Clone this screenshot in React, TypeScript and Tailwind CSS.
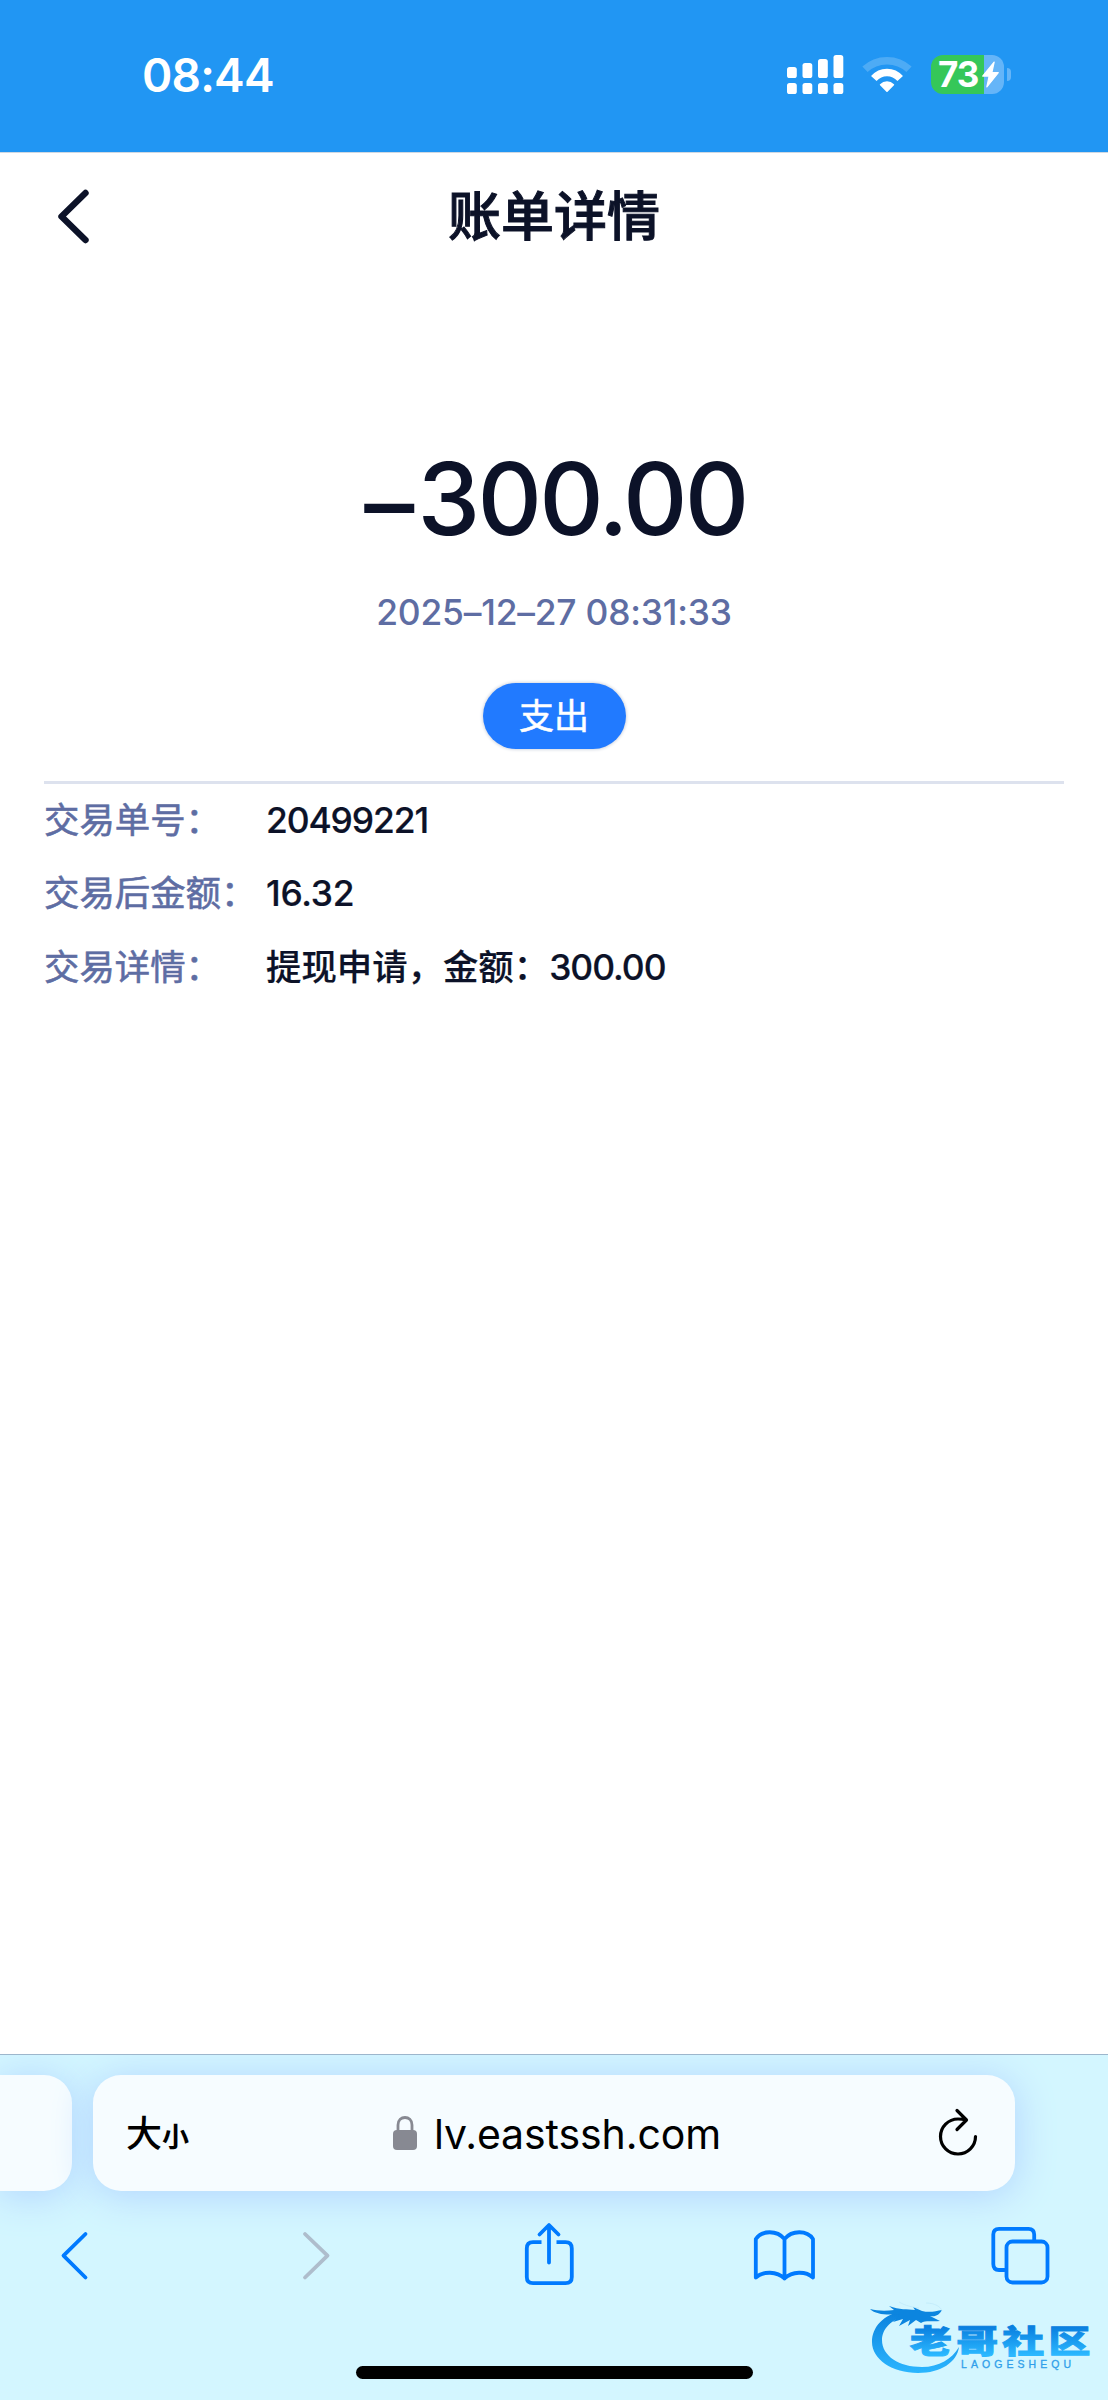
import type { ReactNode } from 'react';

type DetailRowProps = {
  label: string;
  children: ReactNode;
};

const details = [
  { label: '交易单号：', value: '20499221', height: 'h-[73px]', tracking: 'tracking-[-1.1px]' },
  { label: '交易后金额：', value: '16.32', height: 'h-[74px]', tracking: 'tracking-[-0.3px]' },
];

function SignalIcon() {
  const bars = [
    { x: 0, y: 12 },
    { x: 15.5, y: 8 },
    { x: 31, y: 4 },
    { x: 46.5, y: 0 },
  ];
  return (
    <svg width="57" height="39" viewBox="0 0 57 39" fill="white" aria-hidden>
      {bars.map((bar) => (
        <g key={bar.x}>
          <rect x={bar.x} y={bar.y} width="9.8" height={23 - bar.y} rx="2.6" />
          <rect x={bar.x} y="28" width="9.8" height="11" rx="2.6" />
        </g>
      ))}
    </svg>
  );
}

function WifiIcon() {
  return (
    <svg width="50" height="37" viewBox="0 0 50 37" fill="none" stroke="white" aria-hidden>
      <path d="M3 13.3C15 1.8 35 1.8 47 13.3" strokeWidth="7.6" strokeOpacity="0.2" />
      <path d="M11.8 22.5C19 14.4 31 14.4 38.2 22.5" strokeWidth="7.4" />
      <path
        d="M18.6 28.8C22.2 25.2 27.8 25.2 31.4 28.8L25 35.2Z"
        fill="white"
        strokeWidth="1.6"
        strokeLinejoin="round"
      />
    </svg>
  );
}

function BatteryIcon() {
  return (
    <div className="flex items-center gap-[3px]">
      <div className="flex h-[39px] w-[73px] items-center rounded-[12px] bg-[linear-gradient(90deg,#35c759_53px,#65b5f8_53px)] pl-[7px]">
        <span className="w-[43px] text-[35px] leading-[39px] font-bold tracking-[-1px] text-white">73</span>
        <svg className="shrink-0" width="19" height="27" viewBox="0 0 17 26" fill="white" aria-hidden>
          <path
            d="M12 1L1 14.5H7.2L5 25L16 11.2H9.8Z"
            stroke="white"
            strokeWidth="1.2"
            strokeLinejoin="round"
          />
        </svg>
      </div>
      <div className="h-[13px] w-[4px] rounded-r-full bg-[#65b5f8]" />
    </div>
  );
}

function StatusBar() {
  return (
    <div className="flex h-[153px] justify-between border-b border-[#cfd8e2] bg-[#2196f3] pr-[97px] pl-[142px]">
      <span className="pt-[52px] text-[46px] leading-[46px] font-semibold tracking-[-0.8px] text-white">
        08:44
      </span>
      <div className="mt-[55px] flex h-[39px] items-center">
        <SignalIcon />
        <div className="w-[18px]" />
        <WifiIcon />
        <div className="w-[19px]" />
        <BatteryIcon />
      </div>
    </div>
  );
}

function DetailRow({ label, children }: DetailRowProps) {
  return (
    <div className="flex h-full items-center">
      <span className="w-[222px] shrink-0 text-[35.4px] text-[#5e6da3] [-webkit-text-stroke:0.6px_#5e6da3]">
        {label}
      </span>
      <span className="text-[35.4px] font-medium text-[#0c1228] [-webkit-text-stroke:0.2px_#0c1228]">{children}</span>
    </div>
  );
}

function Watermark() {
  return (
    <svg width="230" height="84" viewBox="0 0 230 84" aria-hidden>
      <defs>
        <linearGradient id="ring" x1="0" y1="0" x2="0" y2="1">
          <stop offset="0" stopColor="#0a80dc" />
          <stop offset="1" stopColor="#2bb6ff" />
        </linearGradient>
        <linearGradient id="name" x1="0" y1="0" x2="0" y2="1">
          <stop offset="0.25" stopColor="#0a80e0" />
          <stop offset="0.85" stopColor="#2bb8ff" />
        </linearGradient>
      </defs>
      <path
        d="M34 12C13 17 2 29 2 44C2 61 22 75 48 75C71 75 87 64 89 49C82 61 69 69 52 69C29 69 12 58 12 42C12 31 21 21 40 16Z"
        fill="url(#ring)"
      />
      <path
        d="M0 11C8 13 16 13 24 12L19 8C30 12 37 11 45 12L43 9L52 13C60 15 66 13 72 12C69 17 66 19 60 18L70 23C62 24 56 22 51 25L46 22L38 28L40 22L29 28L33 21L23 24L30 16C18 17 6 17 0 11Z"
        fill="#0c85df"
      />
      <path d="M29 4C36 8 42 9 49 10M56 5C65 5 71 9 72 13" fill="none" stroke="#b9e6f8" strokeWidth="0.6" />
      <g transform="translate(40 54.5) scale(1.27 0.95)">
        <text
          textLength="142"
          lengthAdjust="spacing"
          fill="url(#name)"
          stroke="url(#name)"
          strokeWidth="1"
          className="font-['Noto_Sans_CJK_SC',sans-serif] text-[33px] font-black"
        >
          老哥社区
        </text>
      </g>
      <text
        x="91"
        y="70"
        textLength="110"
        fill="#2f9fea"
        stroke="#2f9fea"
        strokeWidth="0.3"
        className="font-['Liberation_Sans',sans-serif] text-[10.5px]"
      >
        LAOGESHEQU
      </text>
    </svg>
  );
}

function AddressBar() {
  return (
    <div className="flex gap-[21px] pt-[20px]">
      <div className="h-[116px] w-[72px] rounded-r-[28px] bg-[#f6fcff] shadow-[0_4px_38px_2px_#b4d6ff]" />
      <div className="flex h-[116px] w-[922px] items-center rounded-[28px] bg-[#f6fcff] pr-[37px] pl-[33px] shadow-[0_4px_38px_2px_#b4d6ff]">
        <div className="flex w-[267px] items-baseline pt-[2px] font-medium text-black">
          <span className="text-[36px]">大</span>
          <span className="text-[27px] font-bold">小</span>
        </div>
        <svg width="24" height="34" viewBox="0 0 24 34" aria-hidden>
          <path d="M5 16V9C5 -1 19 -1 19 9V16" fill="none" stroke="#878992" strokeWidth="2.8" />
          <rect y="14" width="24" height="20" rx="4" fill="#878992" />
        </svg>
        <span className="flex-1 pt-[3px] pl-[17px] text-[41px] tracking-[-0.1px] text-black">lv.eastssh.com</span>
        <svg
          className="-mt-[3px]"
          width="40"
          height="48"
          viewBox="0 0 40 48"
          fill="none"
          stroke="black"
          strokeWidth="3.2"
          strokeLinecap="round"
          strokeLinejoin="round"
          aria-hidden
        >
          <path d="M37.5 28.5A17.5 17.5 0 1 1 20 11C23.5 11 25.5 11.3 28 12.2M19 2.5L28.5 12L19 21.5" />
        </svg>
      </div>
    </div>
  );
}

function Toolbar() {
  return (
    <svg
      className="block"
      width="1108"
      height="80"
      viewBox="0 2210 1108 80"
      fill="none"
      stroke="#007aff"
      strokeWidth="3.8"
      strokeLinecap="round"
      strokeLinejoin="round"
      aria-hidden
    >
      <path d="M85.5 2234L63.5 2255.7L85.5 2277.5" />
      <path d="M305 2234L327.5 2255.7L305 2277.5" stroke="#aebdcc" />
      <path d="M549 2262.5V2225.5M539.5 2234.5L549 2225L558.5 2234.5" />
      <path
        d="M541.5 2242.2H533Q526.8 2242.2 526.8 2248.5V2277Q526.8 2283.2 533 2283.2H565.5Q571.8 2283.2 571.8 2277V2248.5Q571.8 2242.2 565.5 2242.2H556.5"
        strokeLinecap="butt"
      />
      <path d="M784.5 2239C777 2230 762 2230 755.8 2239V2277.5C763 2271 777 2271 784.5 2278.5C792 2271 806 2271 813 2277.5V2239C807 2230 792 2230 784.5 2239V2278.5" />
      <path d="M1004.5 2270H999Q993.3 2270 993.3 2264V2234.5Q993.3 2228.8 999 2228.8H1028.5Q1034.2 2228.8 1034.2 2234.5V2240" />
      <rect x="1006.5" y="2241.5" width="41" height="41" rx="6" />
    </svg>
  );
}

export default function App() {
  return (
    <div className="flex h-[2400px] w-[1108px] flex-col overflow-hidden bg-white font-['Inter','Noto_Sans_CJK_SC',sans-serif]">
      <StatusBar />

      <header className="grid h-[127px] grid-cols-[1fr_auto_1fr] items-center pl-[56px] text-[#0c1228]">
        <svg
          width="36"
          height="58"
          viewBox="0 0 36 58"
          fill="none"
          stroke="currentColor"
          strokeWidth="6.4"
          strokeLinecap="round"
          strokeLinejoin="round"
          aria-hidden
        >
          <path d="M29.5 5L5.5 28.5L29.5 52" />
        </svg>
        <h1 className="-ml-[56px] pt-[2px] text-[53px] leading-none font-medium [-webkit-text-stroke:1px_#0c1228]">
          账单详情
        </h1>
      </header>

      <main className="flex flex-1 flex-col px-[44px]">
        <section className="flex flex-col items-center border-b-[3px] border-[#dde2ee] pt-[169px] pb-[32px]">
          <p className="pl-[3px] text-[100px] leading-[100px] font-medium tracking-[-2.8px] text-[#0c1228]">
            <span className="relative top-[4px] mr-[6px]">–</span>300.00
          </p>
          <p className="mt-[45px] text-[35.4px] leading-[38px] font-medium tracking-[-0.2px] text-[#5e6da3]">
            2025–12–27 08:31:33
          </p>
          <span className="mt-[51px] flex h-[66px] w-[143px] items-center justify-center rounded-full bg-[#217aff] text-[35px] text-white shadow-[0_0_3px_1px_#d5d9e2] [-webkit-text-stroke:0.5px_white]">
            支出
          </span>
        </section>

        <section>
          {details.map((item) => (
            <div key={item.label} className={item.height}>
              <DetailRow label={item.label}>
                <span className={item.tracking}>{item.value}</span>
              </DetailRow>
            </div>
          ))}
          <div className="h-[74px]">
            <DetailRow label="交易详情：">
              提现申请，金额：<span className="tracking-[-1px]">300.00</span>
            </DetailRow>
          </div>
        </section>
      </main>

      <footer className="relative h-[346px] overflow-hidden border-t border-[#9db6cc] bg-[#d3f6ff]">
        <AddressBar />
        <div className="pt-[19px]">
          <Toolbar />
        </div>
        <div className="mx-auto mt-[76px] h-[13px] w-[397px] rounded-full bg-black" />
        <div className="absolute right-[8px] bottom-[18px]">
          <Watermark />
        </div>
      </footer>
    </div>
  );
}
